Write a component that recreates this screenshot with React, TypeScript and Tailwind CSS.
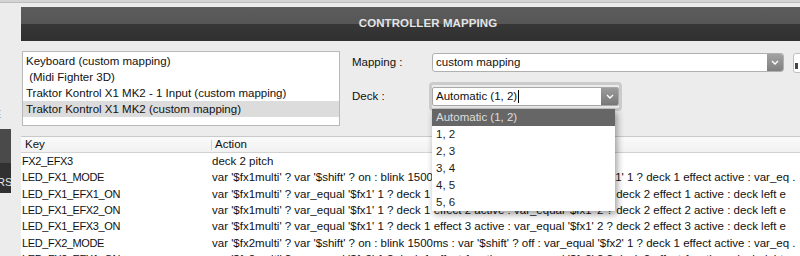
const deckOptions = ["Automatic (1, 2)", "1, 2", "2, 3", "3, 4", "4, 5", "5, 6"];

const devices = [
  "Keyboard (custom mapping)",
  " (Midi Fighter 3D)",
  "Traktor Kontrol X1 MK2 - 1 Input (custom mapping)",
  "Traktor Kontrol X1 MK2 (custom mapping)",
];

const rows: [string, string][] = [
  ["FX2_EFX3", "deck 2 pitch"],
  [
    "LED_FX1_MODE",
    "var '$fx1multi' ? var '$shift' ? on : blink 1500ms : var '$shift' ? off : var_equal '$fx1' 1 ? deck 1 effect active : var_eq .",
  ],
  [
    "LED_FX1_EFX1_ON",
    "var '$fx1multi' ? var_equal '$fx1' 1 ? deck 1 effect 1 active : var_equal '$fx1' 2 ? deck 2 effect 1 active : deck left e",
  ],
  [
    "LED_FX1_EFX2_ON",
    "var '$fx1multi' ? var_equal '$fx1' 1 ? deck 1 effect 2 active : var_equal '$fx1' 2 ? deck 2 effect 2 active : deck left e",
  ],
  [
    "LED_FX1_EFX3_ON",
    "var '$fx1multi' ? var_equal '$fx1' 1 ? deck 1 effect 3 active : var_equal '$fx1' 2 ? deck 2 effect 3 active : deck left e",
  ],
  [
    "LED_FX2_MODE",
    "var '$fx2multi' ? var '$shift' ? on : blink 1500ms : var '$shift' ? off : var_equal '$fx2' 1 ? deck 1 effect active : var_eq .",
  ],
  [
    "LED_FX2_EFX1_ON",
    "var '$fx2multi' ? var_equal '$fx2' 1 ? deck 1 effect 1 active : var_equal '$fx2' 2 ? deck 2 effect 1 active : deck right",
  ],
];

function Chevron() {
  return (
    <svg width="8" height="5" viewBox="0 0 8 5" fill="none">
      <path d="M1 1 L4 4 L7 1" stroke="#fff" strokeWidth="1.4" />
    </svg>
  );
}

export default function App() {
  return (
    <div className="w-[800px] h-[256px] overflow-hidden bg-[#ececec] text-[#111] font-['Liberation_Sans',Arial,sans-serif] text-[11.5px]">
      {/* window top edge */}
      <div className="h-[2px] bg-[#d4d4d4]" />
      <div className="h-px bg-[#bdbdbd]" />
      <div className="h-[4px]" />

      {/* title bar */}
      <div className="ml-[21px] h-[34px] flex items-center justify-center pl-[35px] bg-[linear-gradient(#5c5c5c_0%,#565656_50%,#373737_50%,#303030_100%)]">
        <span className="font-bold text-[11.5px] text-[#e4e4e4] tracking-[0.1px]">CONTROLLER MAPPING</span>
      </div>

      <div className="flex">
        {/* cut-off side panel */}
        <div className="w-[21px] shrink-0 overflow-hidden">
          <div className="h-[67px]" />
          <div className="h-[12px] leading-[12px] ml-[-6px] text-[11px] text-[#8ea3ba]">E</div>
          <div className="h-[9px]" />
          <div className="w-[11px] h-[64px] flex flex-col overflow-hidden">
            <div className="h-[34px] bg-[#4a4a4a]" />
            <div className="flex-1 bg-[#313131] flex items-end pb-[5px]">
              <span className="ml-[-3px] text-[11px] leading-[12px] text-[#e8e8e8]">RS</span>
            </div>
          </div>
        </div>

        <div className="flex-1 min-w-0">
          {/* device list + form */}
          <div className="h-[95px] flex">
            <div className="mt-[10px] ml-[1px] w-[318px] h-[75px] bg-white border border-[#b9b9b9] pt-px">
              {devices.map((d, i) => (
                <div
                  key={i}
                  className={
                    "h-[16px] leading-[16px] pl-[3px] whitespace-pre " + (i === 3 ? "bg-[#dcdcdc]" : "")
                  }
                >
                  {d}
                </div>
              ))}
            </div>

            <div className="ml-[12px] flex-1 min-w-0 pt-[12px]">
              <div className="flex items-center h-[19px]">
                <div className="w-[80px] shrink-0">Mapping :</div>
                <div className="w-[352px] h-[19px] shrink-0 flex bg-white border border-[#b0b0b0] rounded-[3px] overflow-hidden">
                  <div className="flex-1 pl-[3px] leading-[17px]">custom mapping</div>
                  <div className="w-[16px] bg-[linear-gradient(#a2a2a2,#7f7f7f)] flex items-center justify-center">
                    <Chevron />
                  </div>
                </div>
                <div className="ml-[9px] w-[14px] h-[20px] shrink-0 bg-white border border-[#c0c0c0] rounded-[3px] flex items-end pl-[1px] pb-[3px]">
                  <div className="w-[3px] h-[6px] bg-[#444]" />
                </div>
              </div>

              <div className="flex items-center mt-[10px]">
                <div className="w-[77px] shrink-0 pt-[1px]">Deck :</div>
                <div className="relative border-[3px] border-[#cbcbcb] rounded-[4px] py-[2px]">
                  <div className="w-[187px] h-[19px] flex bg-white border border-[#a8a8a8] rounded-[2px] overflow-hidden">
                    <div className="flex-1 pl-[3px] leading-[17px] flex items-center">
                      <span>Automatic (1, 2)</span>
                      <span className="ml-px w-px h-[13px] bg-black" />
                    </div>
                    <div className="w-[17px] bg-[linear-gradient(#9c9c9c,#777)] flex items-center justify-center">
                      <Chevron />
                    </div>
                  </div>
                  {/* open menu */}
                  <div className="absolute left-0 top-[24px] w-[183px] bg-white shadow-[2px_3px_7px_rgba(0,0,0,0.4)] z-10">
                    {deckOptions.map((o, i) => (
                      <div
                        key={o}
                        className={
                          "h-[17px] leading-[17px] pl-[4px] " +
                          (i === 0 ? "bg-[#666666] text-[#dedede]" : "text-[#1a1a1a]")
                        }
                      >
                        {o}
                      </div>
                    ))}
                  </div>
                </div>
              </div>
            </div>
          </div>

          {/* mapping table */}
          <div className="bg-white border-t border-[#c9c9c9]">
            <div className="h-[16px] flex items-center bg-[linear-gradient(#fafafa,#f1f1f1)] border-b border-[#d2d2d2]">
              <div className="w-[190px] pl-[4px]">Key</div>
              <div className="w-px h-[10px] bg-[#d0d0d0]" />
              <div className="pl-[3px]">Action</div>
            </div>
            {rows.map(([k, a]) => (
              <div key={k} className="h-[16.33px] leading-[16.33px] flex whitespace-nowrap">
                <div className="w-[190px] shrink-0 pl-px text-[11px] tracking-[-0.4px]">{k}</div>
                <div className="pl-px overflow-hidden">{a}</div>
              </div>
            ))}
          </div>
        </div>
      </div>
    </div>
  );
}
